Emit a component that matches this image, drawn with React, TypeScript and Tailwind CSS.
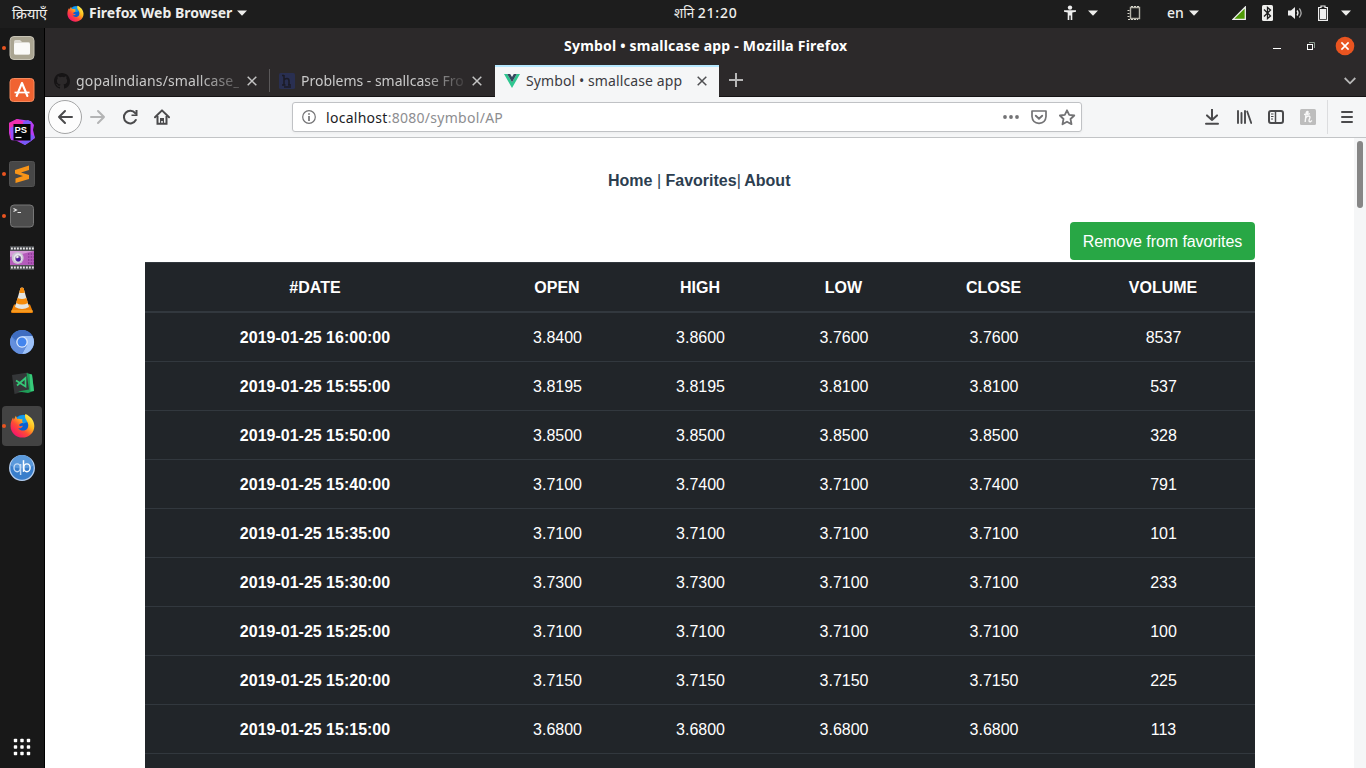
import type { ReactNode } from "react";

const rows: string[][] = [
  ["2019-01-25 16:00:00", "3.8400", "3.8600", "3.7600", "3.7600", "8537"],
  ["2019-01-25 15:55:00", "3.8195", "3.8195", "3.8100", "3.8100", "537"],
  ["2019-01-25 15:50:00", "3.8500", "3.8500", "3.8500", "3.8500", "328"],
  ["2019-01-25 15:40:00", "3.7100", "3.7400", "3.7100", "3.7400", "791"],
  ["2019-01-25 15:35:00", "3.7100", "3.7100", "3.7100", "3.7100", "101"],
  ["2019-01-25 15:30:00", "3.7300", "3.7300", "3.7100", "3.7100", "233"],
  ["2019-01-25 15:25:00", "3.7100", "3.7100", "3.7100", "3.7100", "100"],
  ["2019-01-25 15:20:00", "3.7150", "3.7150", "3.7150", "3.7150", "225"],
  ["2019-01-25 15:15:00", "3.6800", "3.6800", "3.6800", "3.6800", "113"],
  ["", "", "", "", "", ""],
];
const heads = ["#DATE", "OPEN", "HIGH", "LOW", "CLOSE", "VOLUME"];
const cols = "grid grid-cols-[340px_144px_142px_145px_155px_184px] text-center";

type SvgProps = { w: number; h?: number; className?: string; children: ReactNode };

function Svg({ w, h = w, className = "", children }: SvgProps) {
  return (
    <svg width={w} height={h} viewBox={`0 0 ${w} ${h}`} fill="none" className={`block shrink-0 ${className}`}>
      {children}
    </svg>
  );
}

function Caret({ className = "" }: { className?: string }) {
  return (
    <Svg w={10} h={6} className={className}>
      <path d="M0 0.5H10L5 5.7Z" fill="#eeeeec" />
    </Svg>
  );
}

function FirefoxLogo({ size, id }: { size: number; id: string }) {
  return (
    <svg width={size} height={size} viewBox="0 0 26 26" className="block shrink-0">
      <defs>
        <linearGradient id={id} x1="22" y1="3" x2="5" y2="23" gradientUnits="userSpaceOnUse">
          <stop offset="0" stopColor="#fff44f" />
          <stop offset="0.35" stopColor="#ffb81c" />
          <stop offset="0.65" stopColor="#ff4c35" />
          <stop offset="1" stopColor="#f5156c" />
        </linearGradient>
      </defs>
      <circle cx="13.5" cy="12" r="10.3" fill="#0a5fd0" />
      <path d="M7 5Q11 0.8 17 2.4L19 9L14 11L9 8Z" fill="#159ce8" />
      <path
        d="M16 1C21 3 25.3 7.5 25.3 13.5C25.3 20.5 19.8 25.6 13 25.6C6 25.6 0.6 20.3 0.6 13.5C0.6 9.5 2 6.4 3.2 4.6L4 7L6.1 2.8L7.6 6.3C9 5.9 10.4 6.1 11.4 6.6L13 6.4C12.4 8 12.6 8.9 13.4 9.7C12.7 11.2 9.6 10.8 9.6 13C10.2 14.2 11.7 13.8 13.4 13.3C12.8 15.3 10.8 16.4 8.6 15.8C10.8 19.3 16.6 18.9 18.4 15.5C20.1 12.2 18 9.3 16.9 7.4C15.8 5.4 15.1 3.3 16 1Z"
        fill={`url(#${id})`}
      />
    </svg>
  );
}

function TopBar() {
  return (
    <header className="flex h-7 shrink-0 items-center bg-[#1d1d1d] pb-0.5 font-['Noto_Sans',sans-serif] text-sm text-[#eeeeec]">
      <div className="flex w-[660px] shrink-0 items-center">
        <span className="ml-3 w-[55px] whitespace-nowrap text-[14.5px] leading-none">क्रियाएँ</span>
        <FirefoxLogo size={17} id="ffTop" />
        <span className="ml-[5px] w-[148px] whitespace-nowrap text-[14px] font-bold">Firefox Web Browser</span>
        <Caret />
      </div>
      <div className="ml-[14px] w-[390px] shrink-0 whitespace-nowrap font-medium">
        <span className="text-[13.5px] font-normal">शनि</span> <span className="tracking-[0.75px]">21:20</span>
      </div>
      <Svg w={12} h={16}>
        <circle cx="6" cy="2.6" r="2.2" fill="#eee" />
        <path d="M0 5.2H12V6.8L8.3 7.6V15H6.7V10.6H5.3V15H3.7V7.6L0 6.8Z" fill="#eee" />
      </Svg>
      <Caret className="ml-3" />
      <Svg w={14} h={15} className="ml-[29px]">
        <path d="M3.5 1.5H12.5V12.5H3.5Z" stroke="#b5b3a9" strokeWidth="1.4" />
        <path d="M4 0.5H13M0.5 4.5H3M0.5 7.5H3M0.5 10.5H3M1 13.5H11" stroke="#d8d6cc" strokeWidth="1" strokeDasharray="2 1" />
      </Svg>
      <span className="ml-[26px] w-[22px] whitespace-nowrap font-medium">en</span>
      <Caret />
      <Svg w={14} h={14} className="ml-[33px]">
        <path d="M13.3 1V13.3H1Z" fill="#4e9a06" stroke="#eee" strokeWidth="1.3" />
      </Svg>
      <Svg w={11} h={16} className="ml-[16px]">
        <rect width="11" height="16" rx="1.5" fill="#eeeeec" />
        <path d="M2 4.5L8.5 11L5.5 13.5V2.5L8.5 5L2 11.5" stroke="#1d1d1d" strokeWidth="1.3" />
      </Svg>
      <Svg w={15} h={14} className="ml-[15px]">
        <path d="M0 4.5H3L7 1V13L3 9.5H0Z" fill="#eee" />
        <path d="M9 4.5Q11 7 9 9.5" stroke="#eee" strokeWidth="1.3" />
        <path d="M11.3 2.5Q15 7 11.3 11.5" stroke="#aaa" strokeWidth="1.3" />
      </Svg>
      <Svg w={10} h={16} className="ml-[15px]">
        <path d="M3 1H7V2.5H9.4V15.4H.6V2.5H3Z" stroke="#eee" strokeWidth="1.2" />
        <rect x="2" y="4" width="6" height="10" fill="#eee" />
      </Svg>
      <Caret className="ml-[13px]" />
    </header>
  );
}

function Files() {
  return (
    <Svg w={26}>
      <rect x="1" y="1.5" width="24" height="23" rx="4" fill="#aaa592" stroke="#c6c2b4" />
      <path d="M5 7Q5 5 6.5 5H11L13 7H19.5Q21 7 21 8.5V18Q21 19.5 19.5 19.5H6.5Q5 19.5 5 18Z" fill="#dedcd4" />
      <rect x="5" y="8" width="16" height="11.5" rx="1.5" fill="#fafaf8" />
    </Svg>
  );
}

function Software() {
  return (
    <Svg w={26}>
      <rect x="1" y="1.5" width="24" height="23" rx="3.5" fill="#f06331" stroke="#f68a5c" />
      <path d="M13 6L7.6 19M13 6L18.4 19" stroke="#fff" strokeWidth="2.1" strokeLinecap="round" />
      <path d="M5.5 15.5H20.5" stroke="#fff" strokeWidth="1.7" />
    </Svg>
  );
}

function PhpStorm() {
  return (
    <Svg w={26}>
      <path d="M0 4L8 0L22 2L25 6L24 11L26 19L22 22L16 26L8 22L2 21L0 14Z" fill="#b93cf5" />
      <path d="M0 4L8 0L15 3L4 15L1 20Z" fill="#f12fae" />
      <path d="M14 3L19 1L22 3L20 14L26 18L22 22L16 26L11 23L20 20Z" fill="#765af8" />
      <path d="M1 9L5 7V19L2 20Z" fill="#9550ff" />
      <rect x="4.5" y="5" width="17" height="16.5" fill="#050505" />
      <text x="5.6" y="13.6" fill="#fff" fontSize="9.4" fontWeight="700" fontFamily="Liberation Sans, sans-serif">PS</text>
      <path d="M6.5 18.5H12.5" stroke="#fff" strokeWidth="1.2" />
    </Svg>
  );
}

function Sublime() {
  return (
    <Svg w={26}>
      <rect x="0.5" y="0.5" width="25" height="25" rx="2" fill="#474747" stroke="#515151" />
      <path d="M6 9L20 4.5V9L12 11.5L20 14V18L6.5 22V17.5L14 15L6 12.6Z" fill="#f79418" />
    </Svg>
  );
}

function Terminal() {
  return (
    <Svg w={26}>
      <rect x="1.5" y="2" width="23" height="22" rx="3.5" fill="#4d4d4d" stroke="#777" />
      <path d="M4.5 5.5L7.5 7L4.5 8.6M8.5 9.5H12" stroke="#e8e8e8" strokeWidth="1.1" />
    </Svg>
  );
}

function Kazam() {
  return (
    <Svg w={26}>
      <rect x="1" y="1" width="24" height="24" fill="#4a4c50" />
      <path d="M2 3.5H25M2 22.5H25" stroke="#e6e6e6" strokeWidth="2" strokeDasharray="1.8 1.2" />
      <rect x="1" y="6" width="24" height="14" fill="#b45bbb" />
      <path d="M1 6H25L1 12Z" fill="#d49ad7" />
      <path d="M19 9H25M19 12H25M19 15H25M19 18H25" stroke="#762482" strokeWidth="1.2" strokeDasharray="1.4 1.3" />
      <circle cx="8.7" cy="13" r="6" fill="#c9c2d2" />
      <circle cx="9" cy="13" r="4.4" fill="#e8e5ee" />
      <circle cx="9.2" cy="13.6" r="3" fill="#837195" />
      <circle cx="9.3" cy="14.4" r="2.2" fill="#4c18a0" />
      <circle cx="8.4" cy="12" r="1.2" fill="#eee" />
    </Svg>
  );
}

function Vlc() {
  return (
    <Svg w={26}>
      <path d="M5 17.5H21L24 25Q24 26 22.5 26H3.5Q2 26 2 25Z" fill="#ee8107" />
      <path d="M2.3 24H23.7" stroke="#ffb339" />
      <path d="M11.5 1Q13 0 14.5 1L20 20Q13 24 6 20Z" fill="#e5e5e1" />
      <path d="M11.5 1Q13 0 14.5 1L15.8 5.5Q13 6.7 10.2 5.5ZM8.6 11Q13 13 17.4 11L19 16Q13 19 7 16Z" fill="#f58b0b" />
    </Svg>
  );
}

function Chromium() {
  return (
    <Svg w={26}>
      <circle cx="13" cy="13" r="12" fill="#4f83d8" />
      <path d="M13 7H23.4A12 12 0 0 1 13 25L18.2 16Z" fill="#9dc1f8" />
      <path d="M2.5 7.2A12 12 0 0 0 13 25L17.8 16Q13 21 8 16Z" fill="#648fdd" />
      <path d="M2.6 7.2A12 12 0 0 1 23.4 7H13Q8.4 7.5 7.6 12Z" fill="#3f6dc1" />
      <circle cx="13" cy="13" r="5.8" fill="#dbe8fc" />
      <circle cx="13" cy="13" r="4.5" fill="#4385ee" />
    </Svg>
  );
}

function CodeInsiders() {
  return (
    <Svg w={26} className="-mt-0.5">
      <path d="M3 5L19 2.5L21 20L5.5 24Z" fill="#343638" />
      <path d="M17.5 3L23 4.5L25 21L19 23L9 21.5L20 19.5Z" fill="#1f9d58" />
      <path d="M20.5 4L23 4.7L25 21L21.5 21Z" fill="#38ca7a" />
      <path d="M7 10.5L16.5 16.5V8L8 15.5" stroke="#35c978" strokeWidth="1.7" />
    </Svg>
  );
}

function QBittorrent() {
  return (
    <Svg w={26}>
      <circle cx="13" cy="13" r="12.3" fill="#397ecb" stroke="#b4cef0" strokeWidth="1.3" />
      <path d="M2 11A11 11 0 0 1 24 11Q13 16 2 11Z" fill="#5a99db" />
      <ellipse cx="8.2" cy="12.8" rx="3.2" ry="3.9" stroke="#c3daf5" strokeWidth="1.4" />
      <path d="M11.6 9V20" stroke="#c3daf5" strokeWidth="1.5" />
      <path d="M14.5 5.2V16.9" stroke="#fff" strokeWidth="1.5" />
      <ellipse cx="17.9" cy="12.8" rx="3.2" ry="3.9" stroke="#fff" strokeWidth="1.4" />
    </Svg>
  );
}

const dock: { icon: ReactNode; running?: boolean; active?: boolean }[] = [
  { icon: <Files />, running: true },
  { icon: <Software /> },
  { icon: <PhpStorm /> },
  { icon: <Sublime />, running: true },
  { icon: <Terminal />, running: true },
  { icon: <Kazam /> },
  { icon: <Vlc /> },
  { icon: <Chromium /> },
  { icon: <CodeInsiders /> },
  { icon: <div className="pb-px"><FirefoxLogo size={25} id="ffDock" /></div>, running: true, active: true },
  { icon: <QBittorrent /> },
];

function Dock() {
  return (
    <aside className="flex w-[45px] shrink-0 flex-col border-r border-black bg-[#181818]">
      {dock.map((d, i) => (
        <div key={i} className="flex h-[42px] shrink-0 items-center pl-0.5 pb-0.5">
          <div className={`flex h-10 w-10 items-center rounded ${d.active ? "bg-[#434343]" : ""}`}>
            <span className={`mr-[5px] h-1 w-1 shrink-0 rounded-full ${d.running ? "bg-[#e95420]" : ""}`} />
            <div className="-ml-[2px] flex w-[26px] justify-center">{d.icon}</div>
          </div>
        </div>
      ))}
      <Svg w={18} className="mt-auto mb-3 ml-[13px]">
        {[2.5, 9, 15.5].map((y) => [2.5, 9, 15.5].map((x) => <rect key={`${x}-${y}`} x={x - 1.7} y={y - 1.7} width="3.4" height="3.4" rx="0.8" fill="#fff" />))}
      </Svg>
    </aside>
  );
}

function Cross({ color }: { color: string }) {
  return (
    <Svg w={10}>
      <path d="M0.7 0.7L9.3 9.3M9.3 0.7L0.7 9.3" stroke={color} strokeWidth="1.5" />
    </Svg>
  );
}

function TitleBar() {
  return (
    <div className="flex h-[37px] shrink-0 items-center pb-0.5 font-['Noto_Sans',sans-serif] text-white">
      <div className="w-[519px]" />
      <h1 className="w-[709px] whitespace-nowrap text-[14px] font-bold tracking-[0.21px]">Symbol • smallcase app - Mozilla Firefox</h1>
      <Svg w={8} h={10}>
        <path d="M0 7.5H8" stroke="#fff" />
      </Svg>
      <Svg w={10} className="ml-[25px]">
        <path d="M3 1.5H8.5V7" stroke="#8a9a8e" />
        <rect x="1.5" y="3.5" width="5" height="5" stroke="#fff" />
      </Svg>
      <Svg w={20} className="ml-[19px]">
        <circle cx="10" cy="10" r="9.3" fill="#e95420" />
        <path d="M6.4 6.4L13.6 13.6M13.6 6.4L6.4 13.6" stroke="#fff" strokeWidth="1.6" />
      </Svg>
    </div>
  );
}

function TabStrip() {
  return (
    <div className="flex h-8 shrink-0 border-b border-[#151314] font-['Noto_Sans',sans-serif] text-[14px] text-[#c9c9c9]">
      <div className="flex w-[225px] shrink-0 items-center pl-[9px]">
        <svg width="16" height="16" viewBox="0 0 16 16" className="shrink-0">
          <path fill="#161415" d="M8 0C3.58 0 0 3.58 0 8c0 3.54 2.29 6.53 5.47 7.59.4.07.55-.17.55-.38 0-.19-.01-.82-.01-1.49-2.01.37-2.53-.49-2.69-.94-.09-.23-.48-.94-.82-1.13-.28-.15-.68-.52-.01-.53.63-.01 1.08.58 1.23.82.72 1.21 1.87.87 2.33.66.07-.52.28-.87.51-1.07-1.78-.2-3.64-.89-3.64-3.95 0-.87.31-1.59.82-2.15-.08-.2-.36-1.02.08-2.12 0 0 .67-.21 2.2.82a7.4 7.4 0 014 0c1.53-1.04 2.2-.82 2.2-.82.44 1.1.16 1.92.08 2.12.51.56.82 1.27.82 2.15 0 3.07-1.87 3.75-3.65 3.95.29.25.54.73.54 1.48 0 1.07-.01 1.93-.01 2.2 0 .21.15.46.55.38A8.01 8.01 0 0016 8c0-4.42-3.58-8-8-8z" />
        </svg>
        <span className="ml-[6px] mr-[8px] w-[163px] overflow-hidden whitespace-nowrap mask-[linear-gradient(to_right,#000_75%,#0004)] tracking-[0.15px]">gopalindians/smallcase_</span>
        <Cross color="#c4c4c4" />
      </div>
      <div className="my-1 -ml-px w-px bg-[#5a5859]" />
      <div className="flex w-[225px] shrink-0 items-center pl-[9px]">
        <Svg w={16}>
          <rect width="16" height="16" rx="1.5" fill="#292f51" />
          <path d="M5 2V12M3 2.5H5M3 12H6.5M5 7Q6 5.5 8 5.5Q10 5.5 10 8V12M9 12H12M5 14H12" stroke="#1b1b25" strokeWidth="1.5" />
        </Svg>
        <span className="ml-[6px] mr-[8px] w-[163px] overflow-hidden whitespace-nowrap mask-[linear-gradient(to_right,#000_75%,#0002)] tracking-[-0.02px]">Problems - smallcase Fro</span>
        <Cross color="#c4c4c4" />
      </div>
      <div className="-mb-px flex w-[224px] shrink-0 items-center border-t-2 border-[#b6e8ff] bg-[#f5f6f7] pl-[9px] pb-[3px] text-[#3b3b3f]">
        <Svg w={16}>
          <path d="M0 1H3.2L8 9.2L12.8 1H16L8 15Z" fill="#2fc690" />
          <path d="M3.2 1H6.2L8 4.1L9.8 1H12.8L8 9.2Z" fill="#34495e" />
        </Svg>
        <span className="ml-[6px] w-[171px] whitespace-nowrap tracking-[0.1px]">Symbol • smallcase app</span>
        <Cross color="#4f4f52" />
      </div>
      <Svg w={14} className="ml-[10px] mt-[8px]">
        <path d="M7 0V14M0 7H14" stroke="#b7b7b7" strokeWidth="2" />
      </Svg>
      <Svg w={12} h={8} className="mt-[12px] mr-[10px] ml-auto">
        <path d="M0.7 1L6 6.3L11.3 1" stroke="#b7b7b7" strokeWidth="1.8" />
      </Svg>
    </div>
  );
}

function Toolbar() {
  return (
    <div className="flex h-[41px] shrink-0 items-center border-b border-[#c2c4c6] bg-[#f5f6f7] pl-[3px] font-['Noto_Sans',sans-serif]">
      <div className="flex h-[34px] w-[34px] items-center justify-center rounded-full border border-[#a4a5a6] bg-[#fdfdfd]">
        <Svg w={16}>
          <path d="M8 2L2 8L8 14M2 8H15" stroke="#4a4a4c" strokeWidth="2" strokeLinecap="round" strokeLinejoin="round" />
        </Svg>
      </div>
      <Svg w={16} className="ml-2">
        <path d="M8 2L14 8L8 14M14 8H1" stroke="#b3b4b5" strokeWidth="2" strokeLinecap="round" strokeLinejoin="round" />
      </Svg>
      <Svg w={16} className="ml-4">
        <path d="M13.8 11A6.3 6.3 0 1 1 13.2 4.2" stroke="#4a4a4c" strokeWidth="2" strokeLinecap="round" />
        <path d="M15.5 1V7H9.5V5.5H13.5V1Z" fill="#4a4a4c" />
      </Svg>
      <Svg w={16} className="ml-4">
        <path d="M1 8.2L8 1.4L15 8.2" stroke="#4a4a4c" strokeWidth="2" strokeLinecap="round" strokeLinejoin="round" />
        <path d="M3.5 7V14.8H12.5V7" stroke="#4a4a4c" strokeWidth="2" />
        <path d="M6 9H10V15H8.8V12H7.2V15H6Z" fill="#4a4a4c" />
      </Svg>
      <div className="ml-[122px] flex h-[30px] w-[790px] shrink-0 items-center rounded-[3px] border border-[#c0c2c5] bg-white pl-[9px] text-[14px] shadow-[0_1px_3px_#0000000c]">
        <Svg w={14}>
          <circle cx="7" cy="7" r="6.3" stroke="#737375" strokeWidth="1.2" />
          <path d="M7 6V11M7 3.2V4.8" stroke="#737375" strokeWidth="1.7" />
        </Svg>
        <span className="ml-[10px] whitespace-nowrap text-[#8d8d90] tracking-[0.28px]"><span className="text-[#1c1c1f]">localhost</span>:8080/symbol/AP</span>
        <Svg w={16} h={4} className="ml-auto">
          {[2, 8, 14].map((x) => <circle key={x} cx={x} cy="2" r="1.9" fill="#737375" />)}
        </Svg>
        <Svg w={16} className="ml-3">
          <path d="M1 2H15V7.5Q14.5 14 8 14.3Q1.5 14 1 7.5Z" stroke="#737375" strokeWidth="1.7" strokeLinejoin="round" />
          <path d="M4.8 6.7L8 9.7L11.2 6.7" stroke="#737375" strokeWidth="1.9" strokeLinecap="round" />
        </Svg>
        <Svg w={17} className="ml-3 mr-[5px]">
          <path d="M8 1.3L10.2 5.9L15.3 6.5L11.5 10L12.5 15.2L8 12.7L3.5 15.2L4.5 10L0.9 6.5L5.8 5.9Z" stroke="#737375" strokeWidth="1.8" strokeLinejoin="round" />
        </Svg>
      </div>
      <Svg w={14} h={16} className="ml-[123px]">
        <path d="M7 0.5V11M2 6.4L7 11L12 6.4M1 14.8H13" stroke="#4a4a4c" strokeWidth="2" strokeLinecap="round" strokeLinejoin="round" />
      </Svg>
      <Svg w={16} className="ml-[17px]">
        <path d="M2 2V14M5.5 4V14M9 2V14" stroke="#4a4a4c" strokeWidth="1.9" strokeLinecap="round" />
        <path d="M11.2 2.5L15.2 14" stroke="#4a4a4c" strokeWidth="1.8" strokeLinecap="round" />
      </Svg>
      <Svg w={16} className="ml-4">
        <rect x="1" y="2" width="14" height="12" rx="2" stroke="#4a4a4c" strokeWidth="2" />
        <path d="M7.5 2V14" stroke="#4a4a4c" strokeWidth="1.5" />
        <path d="M3 5H5.5M3 7.5H5.5M3 10H5" stroke="#4a4a4c" />
      </Svg>
      <Svg w={16} className="ml-4">
        <rect width="16" height="16" rx="1.5" fill="#bdbdbd" />
        <path d="M4 5.5Q8.5 5 8 2.6Q6.5 1.6 6 5L5.2 13M5.5 9.5Q6.5 6.8 9 7Q10.8 7.5 9.2 10.5Q8.5 13 10.5 12.7L12 11.5M7 5.6L10 4.6" stroke="#f8f8f8" strokeWidth="1.4" />
      </Svg>
      <div className="ml-[11px] h-[34px] w-px bg-[#dcdddf]" />
      <Svg w={12} h={14} className="ml-[13px]">
        <path d="M1 2H11M1 7H11M1 12H11" stroke="#4a4a4c" strokeWidth="2" strokeLinecap="round" />
      </Svg>
    </div>
  );
}

function Page() {
  return (
    <div className="flex min-h-0 flex-1 bg-white font-['Liberation_Sans',sans-serif] text-base">
      <main className="flex flex-1 flex-col overflow-hidden pl-[100px] pr-[99px] pt-[31px]">
        <nav className="flex h-6 shrink-0 justify-center whitespace-pre pr-[1.5px] font-bold text-[#2c3e50]">
          <a>Home</a><span className="font-normal"> | </span><a>Favorites</a><span className="-mr-px font-normal">| </span><a>About</a>
        </nav>
        <button className="mt-[29px] flex h-[38px] w-[185px] shrink-0 items-center justify-center self-end rounded bg-[#28a745] pt-0.5 tracking-[-0.07px] text-white">Remove from favorites</button>
        <section className="mt-0.5 shrink-0 bg-[#212529] text-white">
          <div className={`${cols} h-[51px] border-t border-b-2 border-t-[#32383e] border-b-[#32383e] font-bold leading-[50px]`}>
            {heads.map((h) => <div key={h} className="h-12">{h}</div>)}
          </div>
          {rows.map((r, i) => (
            <div key={i} className={`${cols} h-[49px] border-b border-[#32383e] leading-[50px]`}>
              {r.map((c, j) => <div key={j} className={j === 0 ? "h-12 font-bold" : "h-12 pl-px"}>{c}</div>)}
            </div>
          ))}
        </section>
      </main>
      <div className="flex w-3 shrink-0 justify-center bg-[#f5f6f7] pt-[3px]">
        <div className="h-[67px] w-1.5 rounded-full bg-[#868686]" />
      </div>
    </div>
  );
}

export default function App() {
  return (
    <div className="flex h-[768px] w-[1366px] flex-col overflow-hidden">
      <TopBar />
      <div className="flex min-h-0 flex-1">
        <Dock />
        <div className="flex min-w-0 flex-1 flex-col bg-[#2c292a]">
          <TitleBar />
          <TabStrip />
          <Toolbar />
          <Page />
        </div>
      </div>
    </div>
  );
}
